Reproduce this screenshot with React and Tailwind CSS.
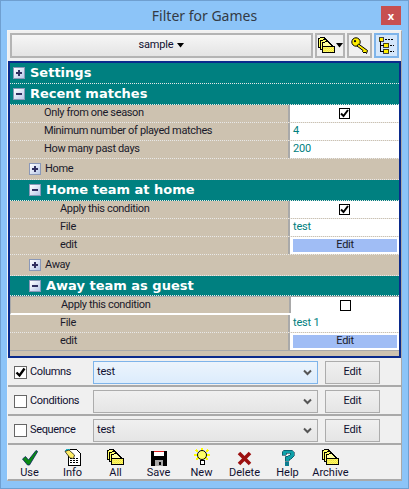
import React from "react";

const FONT = { fontFamily: 'Roboto, sans-serif' };

function Folders({ size = 17 }) {
  return (
    <svg width={size} height={size} viewBox="0 0 16 16" shapeRendering="crispEdges">
      <defs>
        <pattern id="dither" width="2" height="2" patternUnits="userSpaceOnUse">
          <rect width="2" height="2" fill="#ffff70" />
          <rect width="1" height="1" fill="#f0e040" />
          <rect x="1" y="1" width="1" height="1" fill="#f0e040" />
        </pattern>
      </defs>
      <path d="M0.5 3.5 L0.5 1.5 L3.5 0.5 L5.5 0.5 L7.5 2.5 L8.5 4.5 L8.5 9.5 L0.5 9.5 Z" fill="#ffff66" stroke="#000" />
      <path d="M2.5 5.5 L2.5 3.5 L5.5 2.5 L7.5 2.5 L9.5 4.5 L10.5 6.5 L10.5 11.5 L2.5 11.5 Z" fill="#ffff66" stroke="#000" />
      <path d="M4.5 14.5 L4.5 5.5 L7.5 4.5 L9.5 4.5 L12.5 7.5 L15.5 9.5 L15.5 14.5 Z" fill="#ffffa0" stroke="#000" />
      <rect x="5" y="9" width="10" height="5" fill="url(#dither)" />
      <path d="M4.5 8.5 H15.5" stroke="#000" />
    </svg>
  );
}

function Key() {
  return (
    <svg width="17" height="17" viewBox="0 0 17 17">
      <circle cx="5" cy="5" r="4.2" fill="#ffee00" stroke="#000" />
      <circle cx="4" cy="4.2" r="1.1" fill="#000" />
      <path d="M7.5 7 L16.5 13.5 L15.5 16.5 L14 15 L13 16 L11.5 14.5 L12 13.5 L6 9 Z" fill="#ffee00" stroke="#000" strokeWidth="1" />
    </svg>
  );
}

function TreeIcon() {
  return (
    <svg width="17" height="17" viewBox="0 0 17 17" shapeRendering="crispEdges">
      <path d="M2.5 4 V14.5 M2.5 8.5 H6 M2.5 14.5 H6" stroke="#000" fill="none" />
      <rect x="1" y="0.5" width="4" height="3.5" fill="#ffee00" stroke="#000" strokeWidth="0.7" />
      <rect x="5.5" y="6" width="5" height="4" fill="#ffee00" stroke="#000" strokeWidth="0.7" />
      <rect x="5.5" y="12" width="5" height="4" fill="#ffee00" stroke="#000" strokeWidth="0.7" />
      <path d="M7 2.5 H16 M11.5 8.5 H16 M11.5 14.5 H16" stroke="#000" strokeDasharray="2 1" />
    </svg>
  );
}

function Check() {
  return (
    <svg width="16" height="16" viewBox="0 0 16 16">
      <path d="M0.5 9 L3.5 6.5 L6.5 10 L14 0.5 L15.7 1.5 L7.5 15 L5.5 15 Z" fill="#0a8a14" stroke="#0b1f60" strokeWidth="0.8" />
    </svg>
  );
}

function Info() {
  return (
    <svg width="17" height="17" viewBox="0 0 17 17" shapeRendering="crispEdges">
      <path d="M3.5 0.5 H12.5 L16.5 4.5 V16.5 H4.5 V10 Z" fill="#fff" stroke="#000" />
      <path d="M6 9.5 H15 M6 11.5 H15 M6 13.5 H15" stroke="#000" strokeDasharray="2 1" />
      <path d="M0 2 L3 0 L6 0 L3 3 Z" fill="#20b0c0" />
      <path d="M1 2.5 L5 1 L10.5 6 L9.5 9.5 L6 9 Z" fill="#ffee66" stroke="#000" strokeWidth="0.7" shapeRendering="auto" />
    </svg>
  );
}

function Floppy() {
  return (
    <svg width="16" height="16" viewBox="0 0 16 16" shapeRendering="crispEdges">
      <path d="M0 1 H15 L16 2 V16 H0 Z" fill="#000" />
      <rect x="3" y="1" width="10" height="5" fill="#fff" />
      <rect x="3" y="1" width="10" height="1" fill="#e02020" />
      <rect x="4" y="10" width="8" height="6" fill="#a8a8a8" />
      <rect x="8" y="12" width="2" height="3" fill="#000" />
    </svg>
  );
}

function Bulb() {
  return (
    <svg width="18" height="18" viewBox="0 0 18 18" shapeRendering="crispEdges">
      <path d="M9 0 V3 M9 13 V14 M1 7 H4 M14 7 H17 M3 2 L5 4 M15 2 L13 4 M3 12 L5 10 M15 12 L13 10" stroke="#ffff00" strokeWidth="2" />
      <circle cx="9" cy="7" r="4.5" fill="#ffff66" stroke="#000" shapeRendering="auto" />
      <rect x="7" y="12" width="4" height="4" fill="#fff" stroke="#000" />
      <path d="M8 16.5 H10" stroke="#000" />
    </svg>
  );
}

function XIcon() {
  return (
    <svg width="15" height="15" viewBox="0 0 15 15">
      <path d="M2 2 L13 13 M13 2 L2 13" stroke="#9c1010" strokeWidth="3.6" />
    </svg>
  );
}

function Help() {
  return (
    <svg width="14" height="17" viewBox="0 0 14 17" shapeRendering="crispEdges">
      <path d="M1 3 L3 1 H10 L13 3 V7 L10 10 H8 V12 H4 V8 L9 6 V4 H5 V6 H1 Z" fill="#10a0a8" stroke="#063a50" strokeWidth="0.6" />
      <rect x="4" y="13" width="4" height="4" fill="#0c7c90" />
    </svg>
  );
}

function Expander({ open }) {
  return (
    <span className="w-[12px] h-[12px] shrink-0 flex items-center justify-center bg-gradient-to-br from-[#ffffff] to-[#b8c8e8] border border-[#8a98b8] relative">
      <span className="absolute w-[6px] h-[2px] bg-[#303060]" />
      {!open && <span className="absolute w-[2px] h-[6px] bg-[#303060]" />}
    </span>
  );
}

function Header({ title, open, inner, h = "h-[21px]" }) {
  return (
    <div className={`${h} bg-[#008080] border-b border-dotted border-[#e8e8e8] flex items-center ${inner ? "pl-[19px]" : "pl-[3px]"} gap-[5px]`}>
      <Expander open={open} />
      <span className="text-white font-bold text-[13px]" style={{ fontFamily: '"DejaVu Sans", sans-serif' }}>{title}</span>
    </div>
  );
}

function SubHead({ title }) {
  return (
    <div className="h-[21px] bg-[#cdc2b0] border-b border-dotted border-[#e8e8e8] flex items-center pl-[19px] gap-[4px]">
      <Expander />
      <span className="text-[11px] tracking-[-0.35px] text-[#1a1a2a]">{title}</span>
    </div>
  );
}

function Prop({ label, inner, h = "h-[18px]", children, rowClass = "border-b border-dotted border-[#e8e8e8]", labelClass = "" }) {
  return (
    <div className={`${h} flex ${rowClass}`}>
      <div className={`w-[280px] bg-[#cdc2b0] border-r-2 border-[#a9a9a9] flex items-center text-[11px] tracking-[-0.35px] text-[#1a1a2a] ${inner ? "pl-[50px]" : "pl-[34px]"} ${labelClass}`}>
        {label}
      </div>
      <div className="flex-1 bg-white flex items-center">{children}</div>
    </div>
  );
}

function CheckCell({ on }) {
  return (
    <div className="w-full flex justify-center">
      <span className="w-[11px] h-[11px] border-[1.5px] border-black bg-white flex items-center justify-center">
        {on && (
          <svg width="9" height="9" viewBox="0 0 9 9"><path d="M1 4.5 L3.5 7 L8 1" stroke="#000" strokeWidth="2" fill="none" /></svg>
        )}
      </span>
    </div>
  );
}

const Val = ({ children }) => <span className="pl-[3px] text-[11px] tracking-[-0.2px] text-[#008080]">{children}</span>;

const EditCell = () => (
  <div className="w-full pl-[3px] pr-[2px]">
    <div className="h-[13px] bg-[#a0bdf5] flex items-center justify-center text-[11px] tracking-[-0.3px] text-[#1a1a2a]">Edit</div>
  </div>
);

function OptRow({ label, checked, value, focused }) {
  return (
    <div className="h-[29px] shrink-0 border-b-2 border-[#a9a9a9] flex items-center pl-[6px] pt-[1px]">
      <span className="w-[13px] h-[13px] border border-[#666] bg-white flex items-center justify-center shrink-0">
        {checked && (
          <svg width="11" height="11" viewBox="0 0 11 11"><path d="M1.5 5.5 L4.5 8.5 L9.5 1.5" stroke="#000" strokeWidth="2.4" fill="none" /></svg>
        )}
      </span>
      <span className="ml-[3px] w-[63px] text-[11px] tracking-[-0.35px] text-[#101030]">{label}</span>
      <div className={`w-[225px] h-[23px] border flex items-center justify-between pl-[3px] pr-[5px] text-[11px] tracking-[-0.2px] text-[#101030] bg-gradient-to-b ${focused ? "border-[#7eb4ea] from-[#ecf4fc] to-[#dcecfc]" : "border-[#acacac] from-[#f0f0f0] to-[#e5e5e5]"}`}>
        <span>{value}</span>
        <svg width="9" height="7" viewBox="0 0 9 7"><path d="M1 1.5 L4.5 5 L8 1.5" stroke="#555" strokeWidth="2" fill="none" /></svg>
      </div>
      <div className="ml-[7px] w-[55px] h-[23px] border border-[#acacac] bg-gradient-to-b from-[#f0f0f0] to-[#e5e5e5] flex items-center justify-center text-[11px] tracking-[-0.2px] text-[#101030]">Edit</div>
    </div>
  );
}

function Tool({ icon, label }) {
  return (
    <div className="w-[43px] flex flex-col items-center">
      <div className="h-[20px] flex items-end justify-center">{icon}</div>
      <span className="text-[11px] leading-[14px] text-[#101030]">{label}</span>
    </div>
  );
}

export default function App() {
  return (
    <div className="w-[409px] h-[489px] bg-[#8cc4f8] border border-[#6f9fd0] flex flex-col overflow-hidden" style={FONT}>
      <div className="h-[29px] shrink-0 relative flex items-center justify-center text-[#333a44]" style={{ fontFamily: '"Noto Sans", sans-serif', fontSize: "14px" }}>
        Filter for Games
        <div className="absolute left-[380px] top-[5px] w-[20px] h-[19px] bg-[#c75050] flex items-center justify-center text-white text-[11px] font-bold leading-none">x</div>
      </div>
      <div className="ml-[6px] w-[395px] h-[451px] bg-[#f0f0f0] border-l border-t border-r border-[#f4f4f4] border-r-[#a9a9a9] border-b-2 border-b-[#a9a9a9] flex flex-col">
        <div className="h-[30px] shrink-0 flex items-start pt-[2px] pl-[2px] gap-[2px]">
          <div className="w-[303px] h-[25px] border-2 border-[#b4b4b4] bg-gradient-to-b from-[#f6f6f6] to-[#e4e4e4] flex items-center justify-center gap-[4px] text-[11px] tracking-[-0.2px] text-[#101030]">
            sample
            <svg width="7" height="5" viewBox="0 0 7 5"><path d="M0 0 H7 L3.5 4.5 Z" fill="#000" /></svg>
          </div>
          <div className="w-[30px] h-[25px] border-2 border-[#b4b4b4] bg-[#f0f0f0] flex items-center justify-center gap-[1px]">
            <Folders />
            <svg width="7" height="5" viewBox="0 0 7 5"><path d="M0 0 H7 L3.5 4.5 Z" fill="#000" /></svg>
          </div>
          <div className="w-[25px] h-[25px] border-2 border-[#b4b4b4] bg-[#f0f0f0] flex items-center justify-center">
            <Key />
          </div>
          <div className="w-[25px] h-[25px] border-2 border-[#7eb4ea] bg-[#d4e6fa] flex items-center justify-center">
            <TreeIcon />
          </div>
        </div>
        <div className="h-[297px] shrink-0 border-2 border-[#0a2a8c] flex flex-col bg-[#cdc2b0]">
          <Header title="Settings" />
          <Header title="Recent matches" open />
          <Prop label="Only from one season"><CheckCell on /></Prop>
          <Prop label="Minimum number of played matches"><Val>4</Val></Prop>
          <Prop label="How many past days"><Val>200</Val></Prop>
          <SubHead title="Home" />
          <Header title="Home team at home" open inner />
          <Prop label="Apply this condition" inner><CheckCell on /></Prop>
          <Prop label="File" inner><Val>test</Val></Prop>
          <Prop label="edit" inner><EditCell /></Prop>
          <SubHead title="Away" />
          <Header title="Away team as guest" open inner h="h-[20px]" />
          <Prop label="Apply this condition" inner labelClass="pl-[49px]" rowClass="border-t border-l border-[#a9a9a9] border-b-2 border-b-white" h="h-[19px]"><CheckCell /></Prop>
          <Prop label="File" inner><Val>test 1</Val></Prop>
          <Prop label="edit" inner rowClass="border-b border-[#a9a9a9]"><EditCell /></Prop>
        </div>
        <OptRow label="Columns" checked value="test" focused />
        <OptRow label="Conditions" value="" />
        <OptRow label="Sequence" value="test" />
        <div className="flex pt-[1px]">
          <Tool icon={<Check />} label="Use" />
          <Tool icon={<Info />} label="Info" />
          <Tool icon={<Folders />} label="All" />
          <Tool icon={<Floppy />} label="Save" />
          <Tool icon={<Bulb />} label="New" />
          <Tool icon={<XIcon />} label="Delete" />
          <Tool icon={<Help />} label="Help" />
          <Tool icon={<Folders />} label="Archive" />
        </div>
      </div>
    </div>
  );
}
